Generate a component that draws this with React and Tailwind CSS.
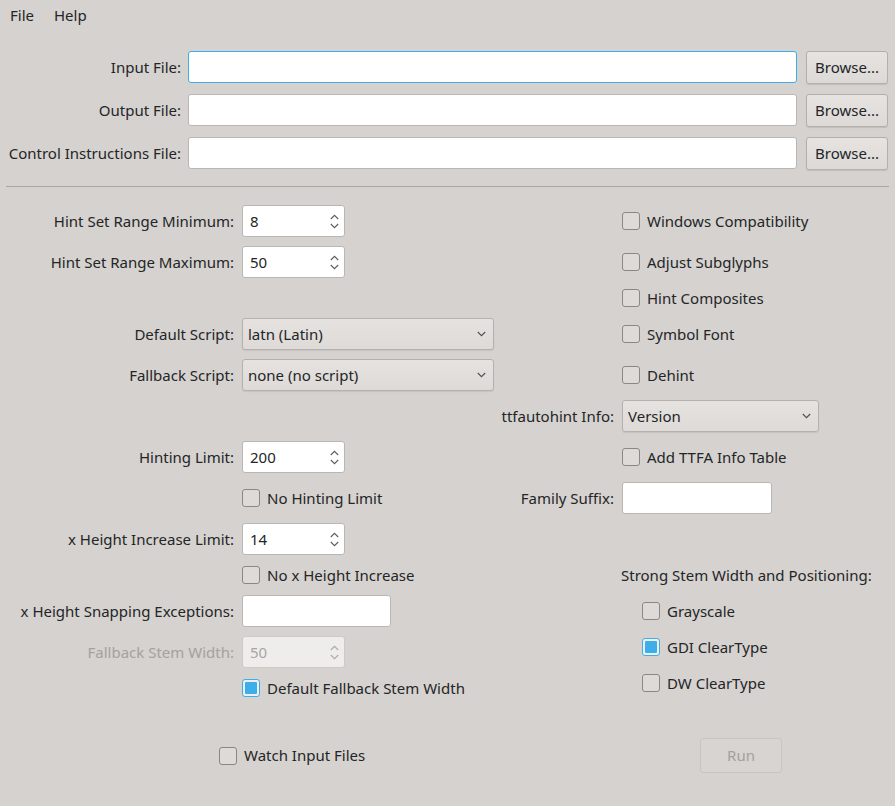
import React from "react";

function Chevron({ dir = "down" }) {
  return (
    <svg width="9" height="6" viewBox="0 0 9 6" className="shrink-0">
      {dir === "down" ? (
        <path d="M0.8 1 L4.5 4.7 L8.2 1" fill="none" stroke="currentColor" strokeWidth="1.1" />
      ) : (
        <path d="M0.8 5 L4.5 1.3 L8.2 5" fill="none" stroke="currentColor" strokeWidth="1.1" />
      )}
    </svg>
  );
}

function Spin({ value, disabled }) {
  return (
    <div
      className={`w-[103px] h-[32px] rounded-[3px] border flex items-center pl-[7px] pr-[5px] ${
        disabled
          ? "border-[#cdc9c6] bg-[#efedeb] text-[#a9a5a2]"
          : "border-[#bab6b3] bg-white text-[#232627]"
      }`}
    >
      <span className="flex-1">{value}</span>
      <div className={`flex flex-col gap-[3px] ${disabled ? "text-[#aeaaa7]" : "text-[#5b5e61]"}`}>
        <Chevron dir="up" />
        <Chevron dir="down" />
      </div>
    </div>
  );
}

function Combo({ value, w }) {
  return (
    <div
      className={`${w} h-[32px] rounded-[3px] border border-[#b5b1ae] bg-gradient-to-b from-[#e5e2e0] to-[#dedad8] shadow-[0_1px_1px_rgba(0,0,0,0.08)] flex items-center pl-[5px] pr-[7px] text-[#232627]`}
    >
      <span className="flex-1">{value}</span>
      <span className="text-[#4d5053]">
        <Chevron dir="down" />
      </span>
    </div>
  );
}

function Field({ w, focus }) {
  return (
    <div
      className={`${w} h-[32px] rounded-[3px] border bg-white ${
        focus ? "border-[#3daee9]" : "border-[#bab6b3]"
      }`}
    />
  );
}

function Check({ label, checked }) {
  return (
    <div className="flex items-center gap-[7px] text-[#232627]">
      {checked ? (
        <div className="w-[18px] h-[18px] rounded-[3px] border border-[#3daee9] bg-[#f0efee] p-[2px]">
          <div className="w-full h-full bg-[#3daee9] rounded-[1px]" />
        </div>
      ) : (
        <div className="w-[18px] h-[18px] rounded-[3px] border border-[#8b8784] bg-[#dedad8]" />
      )}
      <span className="whitespace-nowrap">{label}</span>
    </div>
  );
}

function Button({ children, disabled, className = "" }) {
  return (
    <div
      className={`rounded-[3px] border flex items-center justify-center ${
        disabled
          ? "border-[#c8c4c1] bg-[#d8d4d2] text-[#a5a19e]"
          : "border-[#b3afac] bg-gradient-to-b from-[#e6e3e1] to-[#ddd9d7] text-[#232627] shadow-[0_1px_1px_rgba(0,0,0,0.1)]"
      } ${className}`}
    >
      {children}
    </div>
  );
}

function L({ children, className = "" }) {
  return (
    <div className={`flex items-center justify-end whitespace-nowrap text-[#232627] ${className}`}>
      {children}
    </div>
  );
}

export default function App() {
  return (
    <div className="w-[895px] h-[806px] bg-[#d6d2cf] font-['Noto_Sans',sans-serif] text-[15px] text-[#232627] overflow-hidden">
      {/* menu bar */}
      <div className="h-[31px] flex items-center">
        <span className="px-[10px]">File</span>
        <span className="px-[10px]">Help</span>
      </div>

      {/* file rows */}
      <div className="mt-[20px] pl-[6px] pr-[7px] flex flex-col gap-[11px]">
        {[
          ["Input File:", true],
          ["Output File:", false],
          ["Control Instructions File:", false],
        ].map(([label, focus]) => (
          <div key={label} className="flex items-center h-[32px]">
            <L className="w-[175px]">{label}</L>
            <div className="flex-1 ml-[7px]">
              <Field w="w-full" focus={focus} />
            </div>
            <Button className="ml-[9px] w-[82px] h-[33px]">Browse...</Button>
          </div>
        ))}
      </div>

      {/* separator */}
      <div className="mt-[17px] mx-[6px] h-px bg-[#aaa6a3]" />

      {/* options grid */}
      <div className="mt-[18px] pl-[6px] grid grid-cols-[228px_252px_112px_1fr] grid-rows-[32px_32px_22px_32px_32px_32px_32px_32px_32px_22px_32px_32px_22px] gap-x-[8px] gap-y-[9px]">
        {/* left column */}
        <L className="row-start-1 col-start-1">Hint Set Range Minimum:</L>
        <div className="row-start-1 col-start-2 flex items-center"><Spin value="8" /></div>
        <L className="row-start-2 col-start-1">Hint Set Range Maximum:</L>
        <div className="row-start-2 col-start-2 flex items-center"><Spin value="50" /></div>

        <L className="row-start-4 col-start-1">Default Script:</L>
        <div className="row-start-4 col-start-2 flex items-center"><Combo value="latn (Latin)" w="w-[252px]" /></div>
        <L className="row-start-5 col-start-1">Fallback Script:</L>
        <div className="row-start-5 col-start-2 flex items-center"><Combo value="none (no script)" w="w-[252px]" /></div>

        <L className="row-start-7 col-start-1">Hinting Limit:</L>
        <div className="row-start-7 col-start-2 flex items-center"><Spin value="200" /></div>
        <div className="row-start-8 col-start-2 flex items-center"><Check label="No Hinting Limit" /></div>
        <L className="row-start-9 col-start-1">x Height Increase Limit:</L>
        <div className="row-start-9 col-start-2 flex items-center"><Spin value="14" /></div>
        <div className="row-start-10 col-start-2 flex items-center"><Check label="No x Height Increase" /></div>
        <L className="row-start-11 col-start-1">x Height Snapping Exceptions:</L>
        <div className="row-start-11 col-start-2 flex items-center"><Field w="w-[149px]" /></div>
        <L className="row-start-12 col-start-1 text-[#a5a19e]">Fallback Stem Width:</L>
        <div className="row-start-12 col-start-2 flex items-center"><Spin value="50" disabled /></div>
        <div className="row-start-13 col-start-2 flex items-center"><Check label="Default Fallback Stem Width" checked /></div>

        {/* right column */}
        <div className="row-start-1 col-start-4 flex items-center"><Check label="Windows Compatibility" /></div>
        <div className="row-start-2 col-start-4 flex items-center"><Check label="Adjust Subglyphs" /></div>
        <div className="row-start-3 col-start-4 flex items-center"><Check label="Hint Composites" /></div>
        <div className="row-start-4 col-start-4 flex items-center"><Check label="Symbol Font" /></div>
        <div className="row-start-5 col-start-4 flex items-center"><Check label="Dehint" /></div>
        <L className="row-start-6 col-start-3">ttfautohint Info:</L>
        <div className="row-start-6 col-start-4 flex items-center"><Combo value="Version" w="w-[197px]" /></div>
        <div className="row-start-7 col-start-4 flex items-center"><Check label="Add TTFA Info Table" /></div>
        <L className="row-start-8 col-start-3">Family Suffix:</L>
        <div className="row-start-8 col-start-4 flex items-center"><Field w="w-[150px]" /></div>
        <div className="row-start-10 col-start-4 flex items-center -ml-px whitespace-nowrap">
          Strong Stem Width and Positioning:
        </div>
        <div className="row-start-11 row-span-3 col-start-4 flex flex-col gap-[4px] pl-[20px]">
          <div className="h-[32px] flex items-center"><Check label="Grayscale" /></div>
          <div className="h-[32px] flex items-center"><Check label="GDI ClearType" checked /></div>
          <div className="h-[32px] flex items-center"><Check label="DW ClearType" /></div>
        </div>
      </div>

      {/* bottom row */}
      <div className="mt-[39px] flex items-center pl-[219px]">
        <Check label="Watch Input Files" />
        <Button disabled className="ml-auto mr-[113px] w-[82px] h-[35px]">Run</Button>
      </div>
    </div>
  );
}
